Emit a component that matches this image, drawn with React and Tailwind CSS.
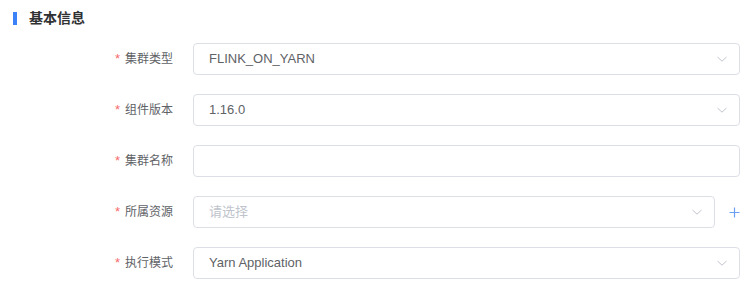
import React from "react";

const Chevron = () => (
  <svg width="10" height="10" viewBox="0 0 10 10" className="shrink-0">
    <path d="M0.5 3 L5 7.2 L9.5 3" fill="none" stroke="#c0c4cc" strokeWidth="1" />
  </svg>
);

const Label = ({ children }) => (
  <div className="w-[193px] shrink-0 flex justify-end items-center pr-5 text-[12px] text-[#606266]">
    <span className="text-[#f56c6c] mr-[5px] text-[13px]">*</span>
    <span>{children}</span>
  </div>
);

const Select = ({ value, placeholder, className = "" }) => (
  <div className={"h-[32px] border border-[#dcdfe6] rounded-[4px] flex items-center pl-[15px] pr-[12px] bg-white " + className}>
    <span className={"flex-1 text-[13px] " + (value ? "text-[#606266]" : "text-[#c0c4cc]")}>
      {value || placeholder}
    </span>
    <Chevron />
  </div>
);

export default function App() {
  return (
    <div className="w-[755px] h-[306px] bg-white" style={{ fontFamily: '"Liberation Sans", "Noto Sans CJK SC", sans-serif' }}>
      <div className="flex items-center pt-[12px] pl-[13px]">
        <div className="w-[4px] h-[13px] bg-[#3b82f6]"></div>
        <div className="ml-[12px] text-[14px] leading-[13px] font-bold text-[#303133]">基本信息</div>
      </div>
      <div className="flex flex-col gap-[19px] mt-[18px] pr-[15px]">
        <div className="flex items-center">
          <Label>集群类型</Label>
          <Select value="FLINK_ON_YARN" className="flex-1" />
        </div>
        <div className="flex items-center">
          <Label>组件版本</Label>
          <Select value="1.16.0" className="flex-1" />
        </div>
        <div className="flex items-center">
          <Label>集群名称</Label>
          <div className="flex-1 h-[32px] border border-[#dcdfe6] rounded-[4px] bg-white"></div>
        </div>
        <div className="flex items-center">
          <Label>所属资源</Label>
          <Select placeholder="请选择" className="flex-1" />
          <div className="w-[25px] flex justify-end">
            <svg width="11" height="11" viewBox="0 0 11 11">
              <path d="M5.5 0.5 V10.5 M0.5 5.5 H10.5" stroke="#6b9ff5" strokeWidth="1.2" />
            </svg>
          </div>
        </div>
        <div className="flex items-center">
          <Label>执行模式</Label>
          <Select value="Yarn Application" className="flex-1" />
        </div>
      </div>
    </div>
  );
}
